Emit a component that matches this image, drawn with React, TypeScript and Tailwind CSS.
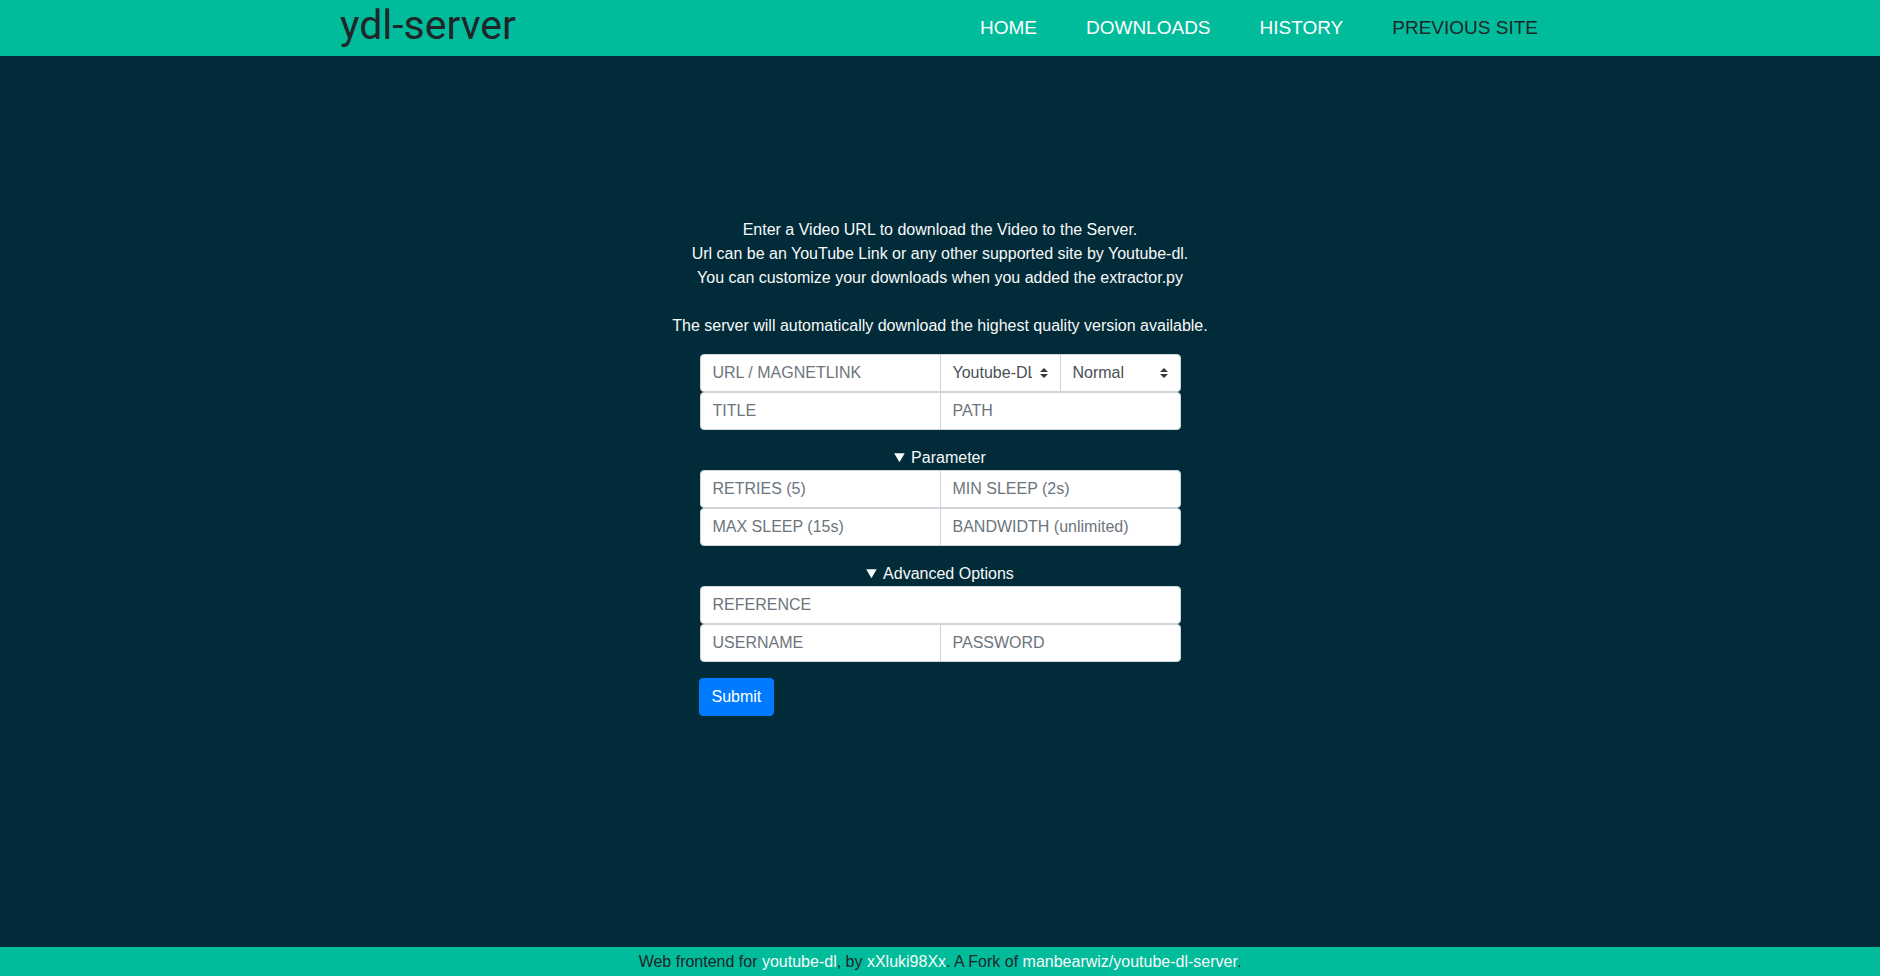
import React from "react";

const Arrow = () => (
  <svg
    className="pointer-events-none absolute right-[12px] top-1/2 -translate-y-1/2"
    width="8"
    height="10"
    viewBox="0 0 4 5"
  >
    <path fill="#343a40" d="M2 0L0 2h4zm0 5L0 3h4z" />
  </svg>
);

const inputBase =
  "h-[38px] bg-white border border-[#ced4da] px-[12px] text-[16px] text-[#495057] placeholder:text-[#6c757d] outline-none min-w-0";

function Row2({ a, b }: { a: string; b: string }) {
  return (
    <div className="flex w-full">
      <input placeholder={a} className={`${inputBase} w-[241px] rounded-l-[4px]`} />
      <input placeholder={b} className={`${inputBase} w-[241px] -ml-px rounded-r-[4px]`} />
    </div>
  );
}

function Sel({ text, last }: { text: string; last?: boolean }) {
  return (
    <div
      className={`relative h-[38px] w-[121px] -ml-px bg-white border border-[#ced4da] pl-[12px] pr-[28px] ${
        last ? "rounded-r-[4px]" : ""
      }`}
    >
      <div className="h-full w-full overflow-hidden whitespace-nowrap leading-[36px] text-[16px] text-[#495057]">
        {text}
      </div>
      <Arrow />
    </div>
  );
}

export default function App() {
  return (
    <div
      className="min-h-[976px] flex flex-col bg-[#012b38] text-[16px]"
      style={{ fontFamily: '"Liberation Sans", Arial, sans-serif' }}
    >
      <header className="h-[56px] bg-[#00bc9b] shrink-0">
        <div className="w-[1200px] mx-auto flex justify-between items-start h-full">
          <h1
            className="text-[41px] leading-[48px] mt-[1px] text-[#212529]"
            style={{ fontFamily: "Roboto, sans-serif" }}
          >
            ydl-server
          </h1>
          <nav className="flex gap-[49px] text-[19px] leading-[24px] mt-[16px] mr-[2px]">
            <a className="text-white">HOME</a>
            <a className="text-white">DOWNLOADS</a>
            <a className="text-white">HISTORY</a>
            <a className="text-[#212529]">PREVIOUS SITE</a>
          </nav>
        </div>
      </header>

      <main className="flex-1 pt-[162px]">
        <div className="text-center text-[#f8f9fa] leading-[24px]">
          <p>Enter a Video URL to download the Video to the Server.</p>
          <p>Url can be an YouTube Link or any other supported site by Youtube-dl.</p>
          <p>You can customize your downloads when you added the extractor.py</p>
          <p className="h-[24px]"></p>
          <p>The server will automatically download the highest quality version available.</p>
        </div>

        <form className="w-[481px] mx-auto mt-[16px]" onSubmit={(e) => e.preventDefault()}>
          <div className="flex w-full">
            <input
              placeholder="URL / MAGNETLINK"
              className={`${inputBase} w-[241px] rounded-l-[4px]`}
            />
            <Sel text="Youtube-DL" />
            <Sel text="Normal" last />
          </div>
          <Row2 a="TITLE" b="PATH" />

          <details open className="mt-[16px]">
            <summary className="text-center text-[#f8f9fa] leading-[24px] cursor-pointer">
              Parameter
            </summary>
            <Row2 a="RETRIES (5)" b="MIN SLEEP (2s)" />
            <Row2 a="MAX SLEEP (15s)" b="BANDWIDTH (unlimited)" />
          </details>

          <details open className="mt-[16px]">
            <summary className="text-center text-[#f8f9fa] leading-[24px] cursor-pointer">
              Advanced Options
            </summary>
            <input
              placeholder="REFERENCE"
              className={`${inputBase} w-full rounded-[4px] block`}
            />
            <Row2 a="USERNAME" b="PASSWORD" />
          </details>

          <button
            type="submit"
            className="mt-[16px] -ml-px h-[38px] px-[12px] rounded-[4px] bg-[#007bff] border border-[#007bff] text-white text-[16px] leading-[24px]"
          >
            Submit
          </button>
        </form>
      </main>

      <footer className="h-[29px] bg-[#00bc9b] text-center leading-[29px] text-[#212529] shrink-0">
        Web frontend for <a className="text-[#f8f9fa]">youtube-dl</a>, by{" "}
        <a className="text-[#f8f9fa]">xXluki98Xx</a>. A Fork of{" "}
        <a className="text-[#f8f9fa]">manbearwiz/youtube-dl-server</a>.
      </footer>
    </div>
  );
}
